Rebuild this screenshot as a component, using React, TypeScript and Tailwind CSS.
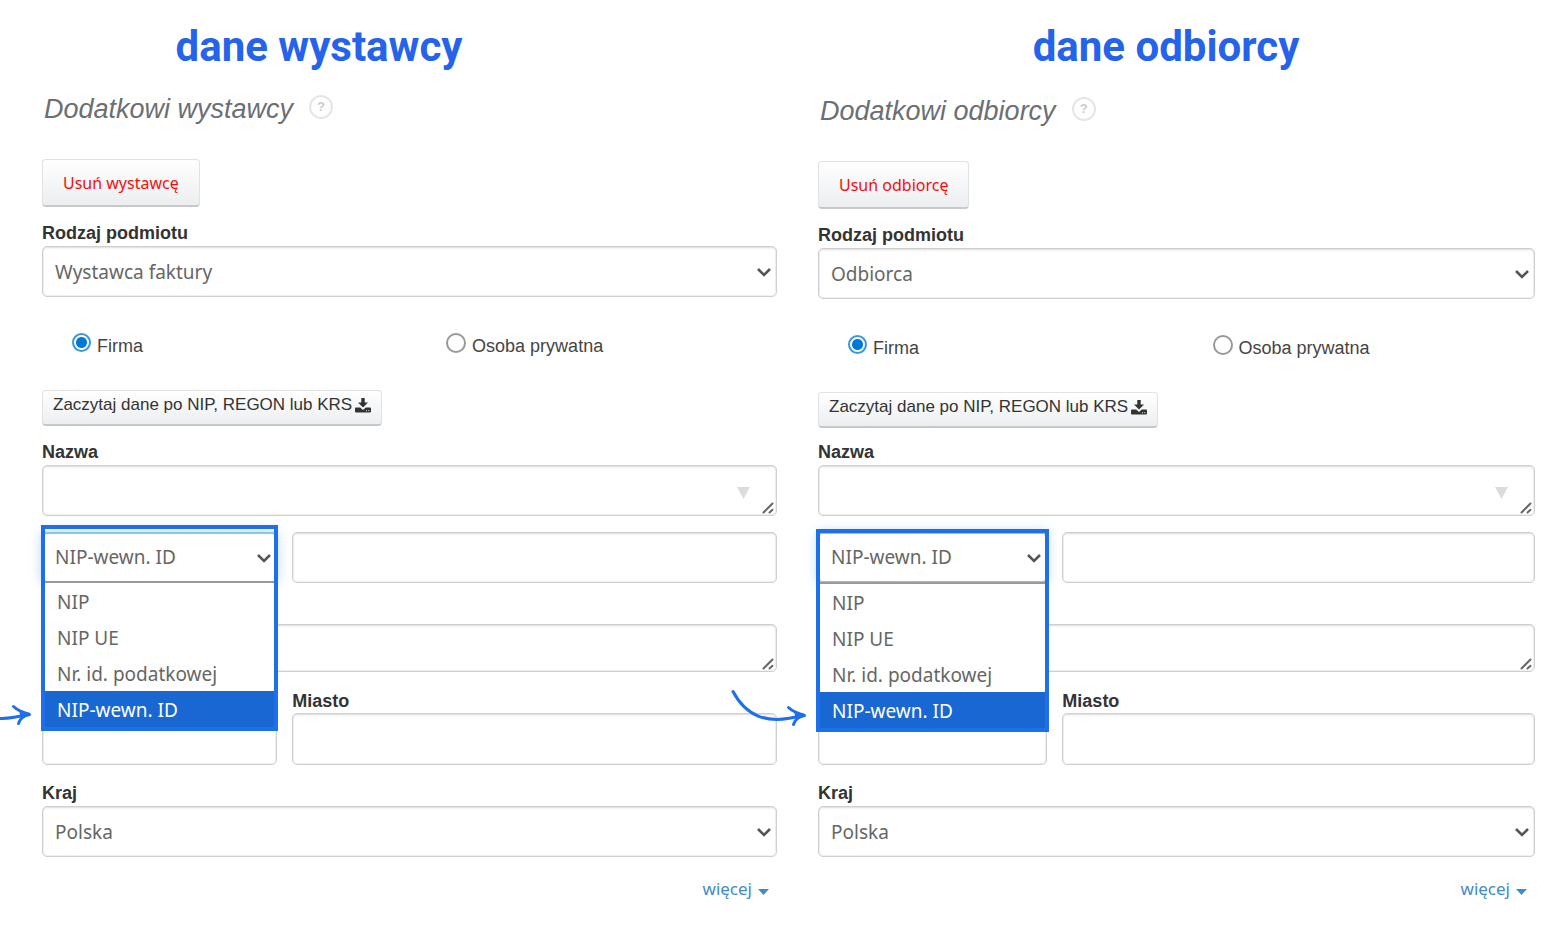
import React from "react";

const ID_TYPES = ["NIP", "NIP UE", "Nr. id. podatkowej", "NIP-wewn. ID"];

const fieldClass =
    "block w-full rounded-[5px] border border-[#cfcfcf] bg-white px-3 pt-[2px] font-['Noto_Sans',sans-serif] text-[19px] text-[#666] shadow-[inset_0_0_0_1px_rgba(0,0,0,0.06),inset_0_2px_2px_rgba(0,0,0,0.05)] outline-none";
const labelClass = "block text-[18px] leading-5 font-bold text-[#333]";
const buttonClass =
    "rounded-[4px] border border-[#e0e2e3] border-b-2 border-b-[#c6c8ca] bg-linear-to-b from-white to-[#eceef0]";

function Chevron() {
    return (
        <svg
            className="pointer-events-none absolute top-1/2 right-[6px] -mt-[4px] h-[10px] w-[14px]"
            viewBox="0 0 14 10"
            fill="none"
            stroke="#555"
            strokeWidth="2.6"
        >
            <path d="M1 1 7 7 13 1" />
        </svg>
    );
}

function DownloadIcon() {
    return (
        <svg className="h-[15px] w-4" viewBox="0 0 16 15" fill="currentColor">
            <path d="M6.300 0h3.400v4.500h3.300L8 9.500 3 4.500h3.300z" />
            <path
                fillRule="evenodd"
                d="M1 9.500h4.200L8 12l2.800-2.500H15a1 1 0 0 1 1 1V13.500a1 1 0 0 1-1 1H1a1 1 0 0 1-1-1V10.500a1 1 0 0 1 1-1zM11 12.300v1h1v-1zM13.300 12.300v1h1v-1z"
            />
        </svg>
    );
}

function ResizeGrip() {
    return (
        <svg
            className="pointer-events-none absolute right-[3px] bottom-[2px] h-[12px] w-[12px]"
            viewBox="0 0 12 12"
            stroke="#666"
            strokeWidth="2"
            strokeLinecap="round"
        >
            <path d="M1.5 10.5 10.5 1.5M7.5 10.5 10.5 7.8" />
        </svg>
    );
}

// Hand-drawn arrow that points at the chosen option
function Arrow() {
    return (
        <svg
            className="pointer-events-none absolute -top-[4px] right-full mr-[13px] h-[40px] w-[78px]"
            viewBox="0 0 78 40"
            fill="none"
            stroke="#1f6feb"
            strokeWidth="3"
            strokeLinecap="round"
            strokeLinejoin="round"
        >
            <path d="M4 3.500C17 28 38 38 74 27" />
            <path d="M59.500 19.500C63 23 69 25.500 75.500 27.500C70 28.500 66 31 64.500 36.500" />
            <path d="M66 24 75.500 27.500 67.500 31z" fill="#1f6feb" strokeWidth="1.500" />
        </svg>
    );
}

type SelectProps = {
    id: string;
    label: string;
    value: string;
    options: string[];
};

function SelectField({ id, label, value, options }: SelectProps) {
    return (
        <div>
            <label htmlFor={id} className={labelClass}>
                {label}
            </label>
            <div className="relative mt-[3px]">
                <select id={id} defaultValue={value} className={`${fieldClass} h-[51px] appearance-none`}>
                    {options.map((o) => (
                        <option key={o}>{o}</option>
                    ))}
                </select>
                <Chevron />
            </div>
        </div>
    );
}

type PartyFormProps = {
    id: string;
    title: string;
    heading: string;
    removeText: string;
    kind: string;
    titleClass: string;
    columnClass: string;
    nameClass: string;
    frameClass: string;
};

function PartyForm({
    id,
    title,
    heading,
    removeText,
    kind,
    titleClass,
    columnClass,
    nameClass,
    frameClass,
}: PartyFormProps) {
    return (
        <section>
            <h1
                className={`text-center font-['Roboto',sans-serif] text-[42px] leading-[50px] font-bold text-[#2563eb] ${titleClass}`}
            >
                {title}
            </h1>

            <form className={columnClass}>
                <div className="flex items-center gap-4 pl-[2px]">
                    <h2 className="text-[27px] leading-8 text-[#6b6f73] italic">{heading}</h2>
                    <button
                        type="button"
                        className="mb-1 h-6 w-6 rounded-full border-2 border-[#e6e6e6] text-[13px] leading-5 font-bold text-[#ccc]"
                    >
                        ?
                    </button>
                </div>

                <button
                    type="button"
                    className={`${buttonClass} mt-[34px] h-12 px-5 font-['Noto_Sans',sans-serif] text-[16px] text-[#ff0a0a]`}
                >
                    {removeText}
                </button>

                <div className="mt-4">
                    <SelectField id={`${id}-kind`} label="Rodzaj podmiotu" value={kind} options={[kind]} />
                </div>

                <div className="mt-9 grid grid-cols-[26fr_23fr] pl-[30px] text-[18px] leading-6 text-[#444]">
                    <label className="flex gap-[6px]">
                        <input
                            type="radio"
                            name={`${id}-type`}
                            defaultChecked
                            className="h-[19px] w-[19px] appearance-none rounded-full border-2 border-[#3a96e0] bg-[radial-gradient(circle,#0078d7_5px,white_6px)]"
                        />
                        <span className="pt-[1px]">Firma</span>
                    </label>
                    <label className="flex gap-[6px]">
                        <input
                            type="radio"
                            name={`${id}-type`}
                            className="h-5 w-5 appearance-none rounded-full border-2 border-[#999] bg-white"
                        />
                        <span className="pt-[1px]">Osoba prywatna</span>
                    </label>
                </div>

                <button
                    type="button"
                    className={`${buttonClass} mt-8 flex h-9 items-center gap-[3px] px-[10px] pb-[5px] text-[17px] text-[#333]`}
                >
                    Zaczytaj dane po NIP, REGON lub KRS
                    <DownloadIcon />
                </button>

                <label htmlFor={`${id}-name`} className={`${labelClass} ${nameClass}`}>
                    Nazwa
                </label>
                <div className="relative mt-[3px]">
                    <textarea id={`${id}-name`} className={`${fieldClass} h-[51px] resize-none`} />
                    <svg
                        className="pointer-events-none absolute top-[22px] right-[27px] h-3 w-[13px]"
                        viewBox="0 0 13 12"
                        fill="#dcdcdc"
                    >
                        <path d="M0 0h13L6.500 12z" />
                    </svg>
                    <ResizeGrip />
                </div>

                <div className="mt-4 grid grid-cols-[33fr_68fr] gap-x-[15px]">
                    <div className="relative z-10">
                        <select
                            aria-label="Rodzaj identyfikatora"
                            defaultValue="NIP-wewn. ID"
                            className="block h-[51px] w-full appearance-none rounded-[4px] border-2 border-[#8cc4f0] bg-white px-[11px] font-['Noto_Sans',sans-serif] text-[19px] text-[#666] shadow-[0_0_12px_rgba(82,168,236,0.5)] outline-none"
                        >
                            {ID_TYPES.map((t) => (
                                <option key={t}>{t}</option>
                            ))}
                        </select>
                        <Chevron />
                        <div className={`absolute border-4 border-[#1f6feb] ${frameClass}`}>
                            <ul
                                role="listbox"
                                className="border-t-2 border-[#999] bg-white font-['Noto_Sans',sans-serif] text-[19px] leading-[38px] text-[#666]"
                            >
                                {ID_TYPES.map((t) => (
                                    <li
                                        key={t}
                                        role="option"
                                        aria-selected={t === "NIP-wewn. ID"}
                                        className="relative h-9 pl-3 whitespace-nowrap aria-selected:bg-[#1967d2] aria-selected:text-white"
                                    >
                                        {t}
                                        {t === "NIP-wewn. ID" && <Arrow />}
                                    </li>
                                ))}
                            </ul>
                        </div>
                    </div>
                    <input type="text" aria-label="Numer" className={`${fieldClass} h-[51px]`} />
                </div>

                <div className="relative mt-[41px]">
                    <textarea aria-label="Ulica i numer" className={`${fieldClass} h-12 resize-none`} />
                    <ResizeGrip />
                </div>

                <div className="mt-[19px] grid grid-cols-[33fr_68fr] items-end gap-x-[15px]">
                    <input type="text" aria-label="Kod pocztowy" className={`${fieldClass} h-[52px]`} />
                    <div>
                        <label htmlFor={`${id}-city`} className={labelClass}>
                            Miasto
                        </label>
                        <input id={`${id}-city`} type="text" className={`${fieldClass} mt-[2px] h-[52px]`} />
                    </div>
                </div>

                <div className="mt-[18px]">
                    <SelectField id={`${id}-country`} label="Kraj" value="Polska" options={["Polska"]} />
                </div>

                <div className="mt-5 flex justify-end pr-2">
                    <a
                        href="#"
                        className="flex items-center gap-[6px] font-['Noto_Sans',sans-serif] text-[17px] leading-6 text-[#428bca]"
                    >
                        więcej
                        <svg className="mt-[6px] h-[6px] w-[11px]" viewBox="0 0 11 6" fill="currentColor">
                            <path d="M0 0h11L5.500 6z" />
                        </svg>
                    </a>
                </div>
            </form>
        </section>
    );
}

function App() {
    return (
        <main className="grid grid-cols-[735fr_717fr] gap-x-[41px] overflow-hidden bg-white pt-[22px] pr-[33px] pb-6 pl-[42px] font-['Liberation_Sans',Arial,sans-serif]">
            <PartyForm
                id="issuer"
                title="dane wystawcy"
                heading="Dodatkowi wystawcy"
                removeText="Usuń wystawcę"
                kind="Wystawca faktury"
                titleClass="pr-[181px]"
                columnClass="pt-[21px]"
                nameClass="mt-4"
                frameClass="-inset-x-px -top-[7px] pt-[52px]"
            />
            <PartyForm
                id="recipient"
                title="dane odbiorcy"
                heading="Dodatkowi odbiorcy"
                removeText="Usuń odbiorcę"
                kind="Odbiorca"
                titleClass="pr-[21px]"
                columnClass="pt-[23px]"
                nameClass="mt-[14px]"
                frameClass="-inset-x-[2px] -top-[3px] pt-[49px]"
            />
        </main>
    );
}

export default App;
